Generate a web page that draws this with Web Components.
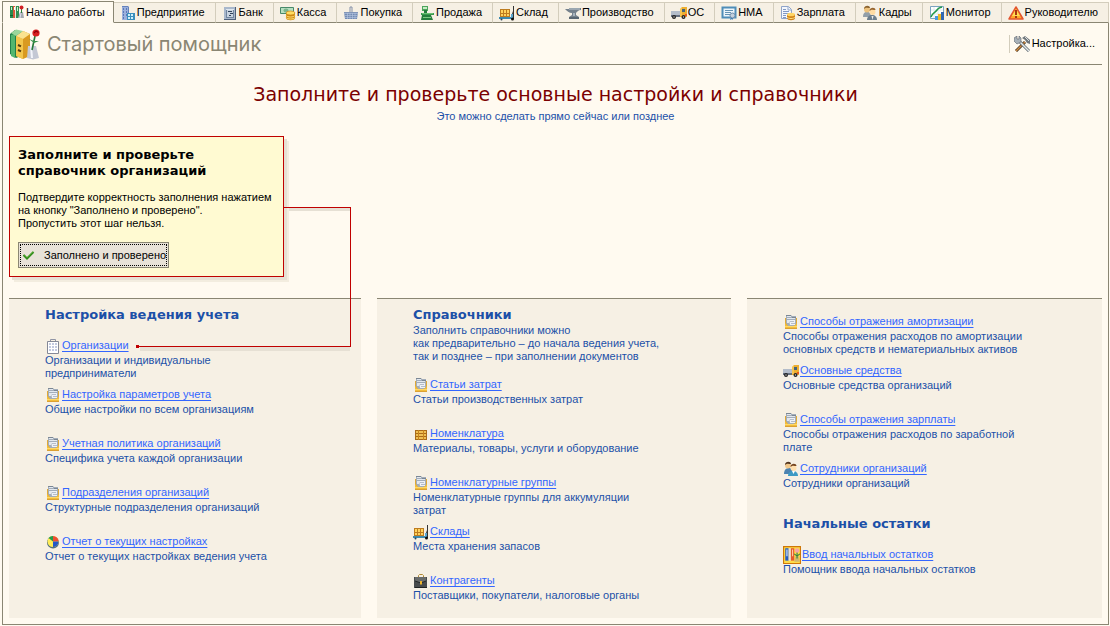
<!DOCTYPE html>
<html lang="ru">
<head>
<meta charset="utf-8">
<title>Стартовый помощник</title>
<style>
  html {
    --page: #fffaf0;
    --panel: #f6f0e4;
    --line: #8a8673;
    --text: #1c50a8;
    --link: #3366ff;
    --accent: #c00000;
    --wide: "DejaVu Sans", Verdana, sans-serif;
  }

  body {
    margin: 0;
    background: var(--page);
    color: #000;
    font: 11px/13px "Liberation Sans", Arial, sans-serif;
  }
</style>
</head>
<body>

<!-- app-icon component -->
<template id="app-icon-template">
  <style>
    :host {
      display: inline-block;
      flex: none;
      width: 16px;
      height: 16px;
    }

    :host([size="large"]) {
      width: 32px;
      height: 32px;
    }

    :host([size="medium"]) {
      width: 18px;
      height: 18px;
    }

    svg {
      display: block;
      width: 100%;
      height: 100%;
    }
  </style>
  <svg viewBox="0 0 16 16" aria-hidden="true"></svg>
</template>

<!-- section-tab component -->
<template id="section-tab-template">
  <style>
    :host {
      display: flex;
      flex: 1 1 auto;
      margin-top: 1px;
      border-top: 1px solid #d3cdbc;
      border-right: 1px solid #d3cdbc;
      border-bottom: 1px solid var(--line);
      background: var(--panel);
    }

    :host([active]) {
      flex-grow: 0;
      margin-top: 0;
      border: 1px solid var(--line);
      border-bottom-color: var(--page);
      background: var(--page);
    }

    button {
      display: flex;
      flex: 1;
      align-items: center;
      gap: 1px;
      padding: 0 3px 0 6px;
      border: 0;
      background: none;
      color: inherit;
      font: inherit;
      white-space: nowrap;
    }

    :host([active]) button {
      padding-right: 8px;
    }
  </style>
  <button type="button" role="tab">
    <app-icon></app-icon>
    <span><slot></slot></span>
  </button>
</template>

<!-- page-header component -->
<template id="page-header-template">
  <style>
    :host {
      display: flex;
      align-items: center;
      justify-content: space-between;
      height: 41px;
      border-bottom: 1px solid var(--line);
    }

    .name {
      display: flex;
      align-items: center;
      gap: 6px;
    }

    h1 {
      margin: 0;
      color: var(--line);
      font: 20px/24px Inter, sans-serif;
    }
  </style>
  <div class="name">
    <app-icon name="start" size="large"></app-icon>
    <h1><slot></slot></h1>
  </div>
  <slot name="tools"></slot>
</template>

<!-- tool-button component -->
<template id="tool-button-template">
  <style>
    :host {
      display: block;
      padding-left: 4px;
      border-left: 1px solid #d3cdbc;
    }

    button {
      display: flex;
      align-items: center;
      gap: 2px;
      height: 18px;
      padding: 0 7px 0 0;
      border: 0;
      background: none;
      color: inherit;
      font: inherit;
    }
  </style>
  <button type="button">
    <app-icon></app-icon>
    <slot></slot>
  </button>
</template>

<!-- step-callout component -->
<template id="step-callout-template">
  <style>
    :host {
      display: block;
      position: relative;
      box-sizing: border-box;
      width: 275px;
      padding: 10px 8px 8px;
      border: 1px solid var(--accent);
      background: #fffad2;
      box-shadow: 3px 3px 0 #e6e0d4, 5px 5px 0 #f3eddf;
    }

    h3 {
      margin: 0 0 12px;
      font: bold 13px/16px var(--wide);
    }

    p {
      margin: 0 0 12px;
      white-space: nowrap;
    }

    button {
      display: flex;
      align-items: center;
      gap: 7px;
      height: 26px;
      padding: 0 2px;
      border: 1px solid #8a8673;
      outline: 1px dotted #000;
      outline-offset: -3px;
      background: #e8e2d8;
      color: inherit;
      font: inherit;
    }

    /* leader line from the callout to the item it talks about */
    svg {
      position: absolute;
      left: 126px;
      top: 70px;
      width: 216px;
      height: 146px;
      z-index: 1;
      pointer-events: none;
    }
  </style>
  <h3><slot name="title"></slot></h3>
  <p><slot></slot></p>
  <button type="button">
    <app-icon name="check"></app-icon>
    <slot name="action"></slot>
  </button>
  <svg viewBox="0 0 216 146" aria-hidden="true">
    <path d="M153 1h61v3h-61zM4 140h210v4H4z" fill="#e6e0d4"/>
    <path d="M148 0h67v140H2v-1h212V1h-66z" fill="#c00000"/>
    <rect x="0" y="138" width="3" height="3" fill="#c00000"/>
  </svg>
</template>

<!-- link-panel component -->
<template id="link-panel-template">
  <style>
    :host {
      display: block;
      padding: 8px 36px;
      border-top: 1px solid var(--line);
      background: var(--panel);
      color: var(--text);
    }

    :host([untitled]) {
      padding-top: 14px;
    }

    ::slotted(h2) {
      margin: 0 0 14px;
      font: bold 13px/16px var(--wide);
    }

    ::slotted(h2.with-intro) {
      margin-bottom: 1px;
    }

    ::slotted(h2.later) {
      margin-top: 7px;
    }

    ::slotted(p) {
      margin: 0 0 13px;
    }
  </style>
  <slot></slot>
</template>

<!-- link-item component -->
<template id="link-item-template">
  <style>
    :host {
      display: block;
      min-height: 49px;
    }

    :host(:last-child) {
      min-height: 0;
    }

    .row {
      display: flex;
      align-items: center;
      gap: 1px;
      height: 17px;
    }

    a {
      color: var(--link);
      text-underline-offset: 2px;
      white-space: nowrap;
    }

    .about {
      max-width: 250px;
    }
  </style>
  <div class="row">
    <app-icon></app-icon>
    <a></a>
  </div>
  <div class="about"><slot></slot></div>
</template>

<!-- start-page component -->
<template id="start-page-template">
  <style>
    :host {
      display: flex;
      flex-direction: column;
      box-sizing: border-box;
      min-height: 100vh;
      padding: 1px 1px 1px 2px;
    }

    nav {
      display: flex;
      height: 22px;
    }

    main {
      display: flex;
      flex: 1;
      flex-direction: column;
      padding: 0 6px 6px;
      border: 1px solid var(--line);
      border-top: 0;
    }

    .intro {
      margin: 16px 0 13px;
      text-align: center;
      color: var(--text);
    }

    .columns {
      display: grid;
      flex: 1;
      grid-template-columns: 352fr 354fr 355fr;
      gap: 16px;
      margin-top: 21px;
    }
  </style>
  <nav role="tablist"><slot name="tabs"></slot></nav>
  <main>
    <slot name="header"></slot>
    <div class="intro"><slot name="intro"></slot></div>
    <slot name="callout"></slot>
    <div class="columns"><slot></slot></div>
  </main>
</template>

<!-- intro-title component -->
<template id="intro-title-template">
  <style>
    :host {
      display: block;
      margin-bottom: 3px;
      color: #7b0000;
      font: 19px/26px var(--wide);
    }
  </style>
  <slot></slot>
</template>

<start-page>
  <section-tab slot="tabs" icon="binders" active>Начало работы</section-tab>
  <section-tab slot="tabs" icon="enterprise">Предприятие</section-tab>
  <section-tab slot="tabs" icon="bank">Банк</section-tab>
  <section-tab slot="tabs" icon="cash">Касса</section-tab>
  <section-tab slot="tabs" icon="basket">Покупка</section-tab>
  <section-tab slot="tabs" icon="scales">Продажа</section-tab>
  <section-tab slot="tabs" icon="store">Склад</section-tab>
  <section-tab slot="tabs" icon="anvil">Производство</section-tab>
  <section-tab slot="tabs" icon="truck">ОС</section-tab>
  <section-tab slot="tabs" icon="patent">НМА</section-tab>
  <section-tab slot="tabs" icon="salary">Зарплата</section-tab>
  <section-tab slot="tabs" icon="staff">Кадры</section-tab>
  <section-tab slot="tabs" icon="monitor">Монитор</section-tab>
  <section-tab slot="tabs" icon="warning">Руководителю</section-tab>

  <page-header slot="header">
    Стартовый помощник
    <tool-button slot="tools" icon="tools">Настройка...</tool-button>
  </page-header>

  <intro-title slot="intro">Заполните и проверьте основные настройки и справочники</intro-title>
  <span slot="intro">Это можно сделать прямо сейчас или позднее</span>

  <step-callout slot="callout">
    <span slot="title">Заполните и проверьте<br>справочник организаций</span>
    Подтвердите корректность заполнения нажатием<br>на кнопку "Заполнено и проверено".<br>Пропустить этот шаг нельзя.
    <span slot="action">Заполнено и проверено</span>
  </step-callout>

  <link-panel>
    <h2>Настройка ведения учета</h2>
    <link-item icon="building" label="Организации">Организации и индивидуальные<br>предприниматели</link-item>
    <link-item icon="folder" label="Настройка параметров учета">Общие настройки по всем организациям</link-item>
    <link-item icon="folder" label="Учетная политика организаций">Специфика учета каждой организации</link-item>
    <link-item icon="folder" label="Подразделения организаций">Структурные подразделения организаций</link-item>
    <link-item icon="pie" label="Отчет о текущих настройках">Отчет о текущих настройках ведения учета</link-item>
  </link-panel>

  <link-panel>
    <h2 class="with-intro">Справочники</h2>
    <p>Заполнить справочники можно<br>как предварительно – до начала ведения учета,<br>так и позднее – при заполнении документов</p>
    <link-item icon="folder" label="Статьи затрат">Статьи производственных затрат</link-item>
    <link-item icon="crate" label="Номенклатура">Материалы, товары, услуги и оборудование</link-item>
    <link-item icon="folder" label="Номенклатурные группы">Номенклатурные группы для аккумуляции<br>затрат</link-item>
    <link-item icon="store" label="Склады">Места хранения запасов</link-item>
    <link-item icon="briefcase" label="Контрагенты">Поставщики, покупатели, налоговые органы</link-item>
  </link-panel>

  <link-panel untitled>
    <link-item icon="folder" label="Способы отражения амортизации">Способы отражения расходов по амортизации<br>основных средств и нематериальных активов</link-item>
    <link-item icon="truck" label="Основные средства">Основные средства организаций</link-item>
    <link-item icon="folder" label="Способы отражения зарплаты">Способы отражения расходов по заработной<br>плате</link-item>
    <link-item icon="people" label="Сотрудники организаций">Сотрудники организаций</link-item>
    <h2 class="later">Начальные остатки</h2>
    <link-item icon="balance" icon-size="medium" label="Ввод начальных остатков">Помощник ввода начальных остатков</link-item>
  </link-panel>
</start-page>

<script>
  // All drawings share a 16x16 grid
  const ICONS = {
    start: `
      <path d="M.5 3 3 1l3 1v12l-2.500 1L.5 13z" fill="#22804a"/><path d="M1 3.500 3 3v12l-2-1z" fill="#53b66e"/>
      <path d="M3.500 4 7 1.500l3.500 1.500v11L7 15.500 3.500 14z" fill="#d99a21"/><path d="M3.500 4 7 5.500v10L3.500 14z" fill="#f3c64c"/>
      <path d="M3.500 4 7 1.500 10.500 3 7 5.500z" fill="#fae38f"/><path d="M1 2.500 3.500.8 7 1.500 3.500 4z" fill="#9ad69b"/>
      <path d="M4.500 8.500l1.500.7M4.500 11l1.500.7" stroke="#563b10"/>
      <path d="M9.500 9h4l1.500 6-3 .8-3-.8z" fill="#c4c8d4"/><path d="M11 9l.5 6" stroke="#f3f4fa"/>
      <path d="M11.500 11 13 4" stroke="#257838" stroke-width=".8"/><path d="M12.500 6.500 10 5.500l2.500 2 2.500-1z" fill="#38914a"/>
      <circle cx="13.500" cy="2.500" r="1.800" fill="#d8201f"/><path d="M12.500 2.500l1-1 1.200.8" stroke="#8c0008" stroke-width=".6" fill="none"/>`,
    binders: `
      <path d="M1 2h3v12H1z" fill="#288b4c"/><path d="M2 3h1v3H2z" fill="#d3f0ce"/><path d="M1 11h3v1H1z" fill="#125d30"/>
      <path d="M4 2h3v12H4z" fill="#d8593a"/><path d="M5 3h1v3H5z" fill="#fff"/><path d="M6 2h1v12H6z" fill="#e8e5da"/>
      <path d="M7 2h3v12H7z" fill="#2f8f52"/><path d="M8 3h1v4H8z" fill="#d3f0ce"/>
      <path d="M11 8h3l1 6H9z" fill="#a5a9b0"/><path d="M12 9l-1 5" stroke="#dde"/><path d="M12.500 9V5" stroke="#267b38"/>
      <circle cx="12.500" cy="3.500" r="2" fill="#d11f25"/>`,
    enterprise: `
      <path d="M2 1h6l1 1v13H2z" fill="#6582bd"/><path d="M2 2h6v13H2z" fill="#9bb0dc"/>
      <path d="M3 3h1v2H3zm3 0h1v2H6zM3 6h1v2H3zm3 0h1v2H6zM3 9h1v2H3zm3 0h1v2H6zM3 12h1v2H3z" fill="#5a78b8"/>
      <path d="M7 8h8v7H7z" fill="#3b8fbd"/><path d="M8 9h2v2H8zm3 0h2v2h-2zm-3 3h2v2H8zm3 0h2v2h-2z" fill="#d1f0fa"/>`,
    bank: `
      <path d="M2 2h12v13H2z" fill="#4d5f7a"/><path d="M2 2h11v12H2z" fill="#a9b8cc"/><path d="M4 4h8v9H4z" fill="#71859f"/>
      <path d="M5 5h6v7H5z" fill="#c8d3e0"/><path d="M6 6h4v1H6zm2 2h3v1H8zM7 10h2v1H7z" fill="#31435c"/><path d="M4 4h8v1H4z" fill="#dfe7f0"/>`,
    cash: `
      <path d="M.5 2.500h13v6H.5z" fill="#b7dfc1" stroke="#48896a"/><ellipse cx="6" cy="5.500" rx="2.500" ry="2" fill="#7ab58b"/>
      <path d="M6 8v5c0 3 9 3 9 0V8z" fill="#d18a12"/><path d="M6 10.500c1 2 8 2 9 0M6 12.500c1 2 8 2 9 0" stroke="#ffe278" fill="none"/><ellipse cx="10.500" cy="8" rx="4.500" ry="2" fill="#ffdc60" stroke="#c78314" stroke-width=".7"/>`,
    basket: `
      <path d="M7 8V2h2v6" stroke="#8490a8" fill="none"/><path d="M1 7h14l-1 7H2z" fill="#738bb3"/>
      <path d="M1 8.500h14M2 10.500h12M2 12.500h12M4.500 8v6M7 8v6M9.500 8v6M12 8v6" stroke="#b9c8e2" stroke-width=".6"/><path d="M1 7.500h14" stroke="#8296b8"/>`,
    scales: `
      <path d="M3 1h6v5H3z" fill="#4da55c"/><path d="M4 2h4v2H4z" fill="#c8ebc4"/><path d="M5 5v4h3V5z" fill="#257a3b"/>
      <path d="M2 8h13v2H2z" fill="#3b984e"/><path d="M3 8.500h11" stroke="#6ac172"/><path d="M3 10h9l2 5H2z" fill="#267d3c"/><path d="M4 12.500h8" stroke="#7cc980"/>`,
    store: `
      <path d="M1 4h10v8H1z" fill="#bd7c20"/><path d="M2 5h2v3H2zm3 0h2v3H5zm3 0h2v3H8zM2 9h2v2H2zm3 0h2v2H5zm3 0h2v2H8z" fill="#ffd35d"/>
      <path d="M0 12h14v2H0z" fill="#3d8aae"/><path d="M12 12l2-6V1h1v13h-2z" fill="#333"/><path d="M12 9h2v4h-2z" fill="#5aa6d0"/>
      <circle cx="2.500" cy="14.500" r="1" fill="#28465b"/><circle cx="13.500" cy="14" r="1.500" fill="#111"/>`,
    anvil: `
      <path d="M0 4h4V3h12v2c-3 0-4 2-5 3v2l3 2v2H4v-2l3-2V8C4 8 2 6 0 4z" fill="#75818c"/><path d="M4 4h11" stroke="#c1ccd4"/><path d="M8 8h2v3H8z" fill="#a9b5be"/><path d="M4 13h10" stroke="#3f4c58"/>`,
    truck: `
      <path d="M0 6h9v4H0z" fill="#b4bdca"/><path d="M0 10h10v2H0z" fill="#667080"/><path d="M9 12V4l2-2h5v10z" fill="#edae2f"/>
      <path d="M11 4h3v3h-3z" fill="#46647a"/><path d="M14 9h2v2h-2z" fill="#ed551c"/><path d="M10 3v8" stroke="#ffdb75"/>
      <circle cx="3" cy="12" r="2" fill="#222"/><circle cx="12.500" cy="12" r="2" fill="#222"/><circle cx="3" cy="12" r=".7" fill="#ccc"/><circle cx="12.500" cy="12" r=".7" fill="#ccc"/>`,
    patent: `
      <path d="M1.500 2.500h13v10h-13z" fill="#edf5fa" stroke="#4f8db8" stroke-width="2"/><path d="M4 5h8v1H4zm0 2h6v1H4zm0 2h5v1H4z" fill="#6493b4"/>
      <path d="M10 12l-1 3 2-1 1 1v-3z" fill="#387ab5"/><circle cx="11.500" cy="10.500" r="2.500" fill="#c3d0dd" stroke="#6e8dac"/>`,
    salary: `
      <path d="M1.500 1.500h7l3 3v9h-10z" fill="#f4f7fd" stroke="#8fa4c9"/><path d="M3 4h3v1H3zm0 2h6v1H3zm0 2h6v1H3zm0 2h3v1H3zm0 2h3v1H3z" fill="#8199c4"/><path d="M8 2v3h3" fill="none" stroke="#8fa4c9"/>
      <path d="M7 10v3c0 3 8 3 8 0V9z" fill="#d2831a"/><path d="M7 12c1 2 7 2 8 0" stroke="#ffe184" fill="none"/><ellipse cx="11" cy="9.500" rx="4" ry="1.800" fill="#ffd565"/>`,
    staff: `
      <path d="M1 12c0-3 1-5 4-5s4 2 4 5z" fill="#929fa9"/><circle cx="5" cy="4.500" r="3" fill="#edc27c"/><path d="M2 4c0-4 6-4 6-1-2 0-4-1-6 1z" fill="#8c6430"/>
      <path d="M5 15c0-3 2-5 5-5s5 2 5 5z" fill="#6c7e8d"/><circle cx="10.500" cy="7" r="3" fill="#ffdca4"/><path d="M7.500 6c0-4 6-4 6-1-2 0-4-1-6 1z" fill="#98662f"/><path d="M9.500 11l1 4 1-4z" fill="#eee"/>`,
    monitor: `
      <path d="M1.500 1.500h13v12h-13z" fill="#fff" stroke="#7ba3bf"/><path d="M2 5h12M2 9h12M5 2v11M9 2v11" stroke="#e0eaee"/>
      <path d="M2 12C4 7 6 8 8 5s3-2 5-3" stroke="#23984a" fill="none" stroke-width="1.500"/>
      <path d="M6 11h3v4H6z" fill="#4699e0"/><path d="M9 9h3v6H9z" fill="#f1b927"/><path d="M12 7h3v8h-3z" fill="#3067b3"/>`,
    warning: `
      <path d="M8 2 15 14H1z" fill="#ffa928" stroke="#e2542e" stroke-width="1.500" stroke-linejoin="round"/><path d="M8 4 12 11H4z" fill="#ffdc55"/><path d="M7 5h2v5H7zm0 6h2v2H7z" fill="#a83711"/>`,
    tools: `
      <path d="M2 15 11 6" stroke="#463521" stroke-width="3"/><path d="M2 15 11 6" stroke="#d08a40" stroke-width="1.500"/><path d="M8 2l3-2 5 4v4l-3-1-2-3z" fill="#70777d"/><path d="M11 1l4 4" stroke="#d8dcde"/>
      <path d="M4 4 15 15" stroke="#59636b" stroke-width="3"/><path d="M4 4 15 15" stroke="#e6eaeb" stroke-width="1.500"/><path d="M0 2v3l3 3 4-2V2L5 0v3H3V0z" fill="#a8b1b8" stroke="#576068" stroke-width=".6"/>`,
    check: `<path d="M2.500 8 6 11.500 12.500 5" fill="none" stroke="#2d8a17" stroke-width="2"/><path d="M3 7.500 6 10.500 12 4.500" fill="none" stroke="#78c14d" stroke-width=".7"/>`,
    building: `
      <path d="M5.500 3V1.500h5V3" fill="none" stroke="#9095a5"/><path d="M2.500 3.500h11v12h-11z" fill="#fff" stroke="#858997"/>
      <path d="M4 5h2v2H4zm3 0h2v2H7zm3 0h2v2h-2zM4 8h2v2H4zm3 0h2v2H7zm3 0h2v2h-2zM4 11h2v2H4zm3 0h2v2H7zm3 0h2v2h-2z" fill="#c3cae0"/>`,
    folder: `
      <path d="M2 4h12v11H2z" fill="#e0a936"/><path d="M3 1h5l1 1h4v9l-3 1H5L3 9z" fill="#a3adb9"/>
      <path d="M4 2h4v1H4zm0 2h8v1H4zm0 2h2v3H4z" fill="#e3e8ee"/><path d="M6 6h6v5H7z" fill="#eef1f6"/>
      <path d="M3 1h5v1H3zm6 2h4v1H9z" fill="#7b8794"/><path d="M7 7h4v1H7zm1 2h4v1H8z" fill="#b5bdc9"/>
      <path d="M2 9l3 3h6l3-3v6H2z" fill="#f2bd3a"/><path d="M2 12h12v1H2z" fill="#ffd869"/><path d="M2 14h12v1H2z" fill="#dba033"/>`,
    pie: `
      <ellipse cx="8" cy="8.500" rx="6" ry="6" fill="#54717c"/><circle cx="8" cy="7.500" r="5.500" fill="#ffec55"/><path d="M8 7.500V2a5.500 5.500 0 0 1 5.500 5.500z" fill="#ef4d33"/><path d="M8 7.500h5.500A5.500 5.500 0 0 1 8 13z" fill="#2358c9"/><path d="M8 7.500 3.500 4A5.500 5.500 0 0 1 8 2z" fill="#259c4c"/>`,
    crate: `
      <path d="M2 4h12v10H2z" fill="#a96b19"/><path d="M3 5h2v2H3zm3 0h4v2H6zm5 0h2v2h-2zM3 8h2v2H3zm3 0h4v2H6zm5 0h2v2h-2zM3 11h2v2H3zm3 0h4v2H6zm5 0h2v2h-2z" fill="#efc053"/><path d="M5.500 4v10M10.500 4v10" stroke="#c9851b"/>`,
    briefcase: `
      <path d="M5.500 4V2.500L6.500 1.500h3l1 1V4" fill="none" stroke="#b18a33"/><path d="M1 4h13v11H1z" fill="#484b4c"/><path d="M2 4h11v4l-5 2-6-2z" fill="#686b6a"/><path d="M2 8l6 2 5-2" stroke="#252829" fill="none"/><path d="M7 8h2v3l-1 1-1-1z" fill="#efb52d"/><path d="M2 14.500h12" stroke="#202323"/>`,
    people: `
      <path d="M1 13c0-4 2-6 5-6s4 2 4 6z" fill="#4c83b1"/><circle cx="5" cy="4.500" r="3" fill="#f1c88b"/><path d="M2 4c0-4 6-4 6-1-2 0-4-1-6 1z" fill="#51351f"/>
      <path d="M5 15c0-3 2-5 5-5s5 2 5 5z" fill="#3d9ac4"/><circle cx="10.500" cy="7" r="3" fill="#ffe0af"/><path d="M7.500 6c0-4 6-4 6-1-2 0-4-1-6 1z" fill="#76451f"/><path d="M9 10l1.500 3 1.500-3z" fill="#fff"/>`,
    balance: `
      <path d="M.5.5h15v15H.5z" fill="#ffdc48" stroke="#cf7707"/><path d="M2 2h3v11H2z" fill="#245cc0"/><path d="M3 3h1v6H3z" fill="#e0edff"/><path d="M5 2h2v11H5z" fill="#e8e1db"/><path d="M7 2h3v11H7z" fill="#e4582b"/><path d="M8 3h1v6H8z" fill="#ffc6a2"/>
      <path d="M10 14l1-5h3l1 5z" fill="#d1b76d"/><path d="M12.500 11V5M10 7l2.500 2L15 7" stroke="#338240" fill="none"/><circle cx="12.500" cy="4" r="2" fill="#f5a3a6"/>`
  };

  function attach(el, name) {
    const root = el.attachShadow({mode: 'open'});
    root.appendChild(document.querySelector('#' + name + '-template').content.cloneNode(true));
    return root;
  }

  class AppIcon extends HTMLElement {
    static get observedAttributes() {
      return ['name'];
    }

    constructor() {
      super();
      attach(this, 'app-icon');
    }

    attributeChangedCallback(name, oldValue, newValue) {
      this.shadowRoot.querySelector('svg').innerHTML = ICONS[newValue] || '';
    }
  }

  class SectionTab extends HTMLElement {
    constructor() {
      super();
      attach(this, 'section-tab');
    }

    connectedCallback() {
      this.shadowRoot.querySelector('app-icon').setAttribute('name', this.getAttribute('icon'));
      this.shadowRoot.querySelector('button').setAttribute('aria-selected', this.hasAttribute('active'));
    }
  }

  class ToolButton extends HTMLElement {
    constructor() {
      super();
      attach(this, 'tool-button');
    }

    connectedCallback() {
      this.shadowRoot.querySelector('app-icon').setAttribute('name', this.getAttribute('icon'));
    }
  }

  class LinkItem extends HTMLElement {
    constructor() {
      super();
      attach(this, 'link-item');
    }

    connectedCallback() {
      const icon = this.shadowRoot.querySelector('app-icon');
      const link = this.shadowRoot.querySelector('a');
      icon.setAttribute('name', this.getAttribute('icon'));
      if (this.hasAttribute('icon-size')) {
        icon.setAttribute('size', this.getAttribute('icon-size'));
      }
      link.textContent = this.getAttribute('label');
      link.href = this.getAttribute('href') || '#';
    }
  }

  customElements.define('app-icon', AppIcon);
  customElements.define('section-tab', SectionTab);
  customElements.define('tool-button', ToolButton);
  customElements.define('link-item', LinkItem);

  // Elements that only lay out their slots
  ['page-header', 'intro-title', 'step-callout', 'link-panel', 'start-page'].forEach(name => {
    customElements.define(name, class extends HTMLElement {
      constructor() {
        super();
        attach(this, name);
      }
    });
  });
</script>
</body>
</html>
